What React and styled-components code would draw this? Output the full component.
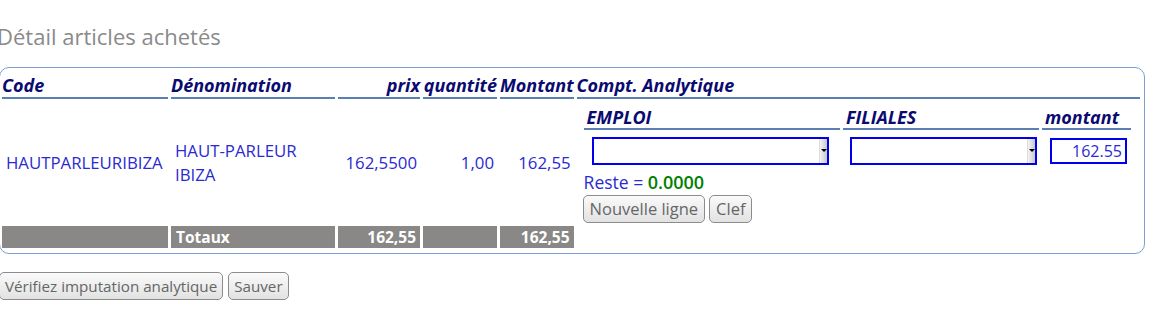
import React from "react";
import styled, { createGlobalStyle } from "styled-components";

const Global = createGlobalStyle`
  body {
    margin: 0;
    background: #fff;
    font-family: "Open Sans", "Noto Sans", sans-serif;
  }
`;

const Page = styled.div`
  margin-left: -3px;
  padding-top: 21px;
  width: 1148px;
`;

const Title = styled.h2`
  margin: 0 0 16px 0;
  font-size: 22px;
  font-weight: normal;
  color: #8a8a8a;
  line-height: 30px;
`;

const Box = styled.fieldset`
  margin: 0 0 0 2px;
  padding: 0 0 3px 0;
  border: 1px solid #7a9fd0;
  border-radius: 10px;
`;

const Table = styled.table`
  border-collapse: separate;
  border-spacing: 3px 2px;
  width: 100%;
  margin-left: -1px;
`;

const Th = styled.th`
  font-style: italic;
  font-weight: bold;
  font-size: 18px;
  color: #0a0a70;
  text-align: ${(p) => p.align || "left"};
  border-bottom: 2px solid #5b7fb2;
  padding: 5px 0 1px 0;
  line-height: 21px;
  white-space: nowrap;
  width: ${(p) => p.w || "auto"};
`;

const Td = styled.td`
  font-size: 16.8px;
  color: #2a2ad0;
  text-align: ${(p) => p.align || "left"};
  padding: 0 ${(p) => (p.align === "right" ? "3px" : "0")} 0 4px;
  line-height: 24px;
  vertical-align: middle;
`;

const ComptTd = styled.td`
  vertical-align: top;
  padding: 0 0 1px 0;
`;

const TotalTd = styled.td`
  background: ${(p) => (p.empty ? "transparent" : "#8a8886")};
  color: #fff;
  font-weight: bold;
  font-size: 15.5px;
  text-align: ${(p) => p.align || "left"};
  padding: 0 4px 0 5px;
  height: 21px;
  line-height: 21px;
  border-top: ${(p) => (p.dotted ? "1px dotted #888" : "none")};
`;

const SubTable = styled.table`
  border-collapse: separate;
  border-spacing: 3px 2px;
  width: calc(100% - 10px);
  margin: 0 0 0 4px;
`;

const SubTh = styled(Th)`
  padding: 4px 0 0 3px;
`;

const SubTd = styled.td`
  padding: 5px 0 0 ${(p) => p.pl || "8px"};
  vertical-align: top;
`;

const Select = styled.div`
  position: relative;
  box-sizing: border-box;
  height: 28px;
  width: ${(p) => p.w};
  border: 2px solid #0000ee;
  background: #fff;
`;

const Arrow = styled.span`
  position: absolute;
  right: 0;
  top: 0;
  bottom: 0;
  width: 7px;
  background: linear-gradient(to right, #f4f4f4, #c8c8c8);
  border-left: 1px solid #ddd;
  &::after {
    content: "";
    position: absolute;
    top: 10px;
    left: 1px;
    border-left: 3px solid transparent;
    border-right: 3px solid transparent;
    border-top: 3px solid #000;
  }
`;

const Amount = styled.div`
  box-sizing: border-box;
  width: 77px;
  height: 26px;
  margin-top: 1px;
  border: 2px solid #0000ee;
  color: #2a2ad0;
  font-size: 16px;
  text-align: right;
  padding: 0 3px;
  line-height: 22px;
`;

const Reste = styled.div`
  font-size: 17.5px;
  color: #2a2ad0;
  padding: 4px 0 0 7px;
  line-height: 22px;
  b {
    color: #008000;
    font-weight: 600;
    font-size: 18px;
  }
`;

const Actions = styled.div`
  display: flex;
  gap: 4px;
  padding: 2px 0 0 6px;
`;

const Button = styled.button`
  font-family: "Open Sans", "Noto Sans", sans-serif;
  font-size: ${(p) => (p.big ? "16.5px" : "15.2px")};
  color: #666;
  height: 28px;
  padding: 0 ${(p) => (p.big ? "6px" : "5px")};
  border: 1px solid #8c8c8c;
  border-radius: 5px;
  background: linear-gradient(to bottom, #fafafa, #e2e2e2);
  line-height: 24px;
`;

const Footer = styled.div`
  display: flex;
  gap: 5px;
  margin: 18px 0 0 2px;
`;

export default function App() {
  return (
    <Page>
      <Global />
      <Title>Détail articles achetés</Title>
      <Box>
        <Table>
          <thead>
            <tr>
              <Th w="166px">Code</Th>
              <Th w="164px">Dénomination</Th>
              <Th w="82px" align="right">prix</Th>
              <Th w="74px" align="right">quantité</Th>
              <Th w="72px" align="right">Montant</Th>
              <Th>Compt. Analytique</Th>
            </tr>
          </thead>
          <tbody>
            <tr>
              <Td>HAUTPARLEURIBIZA</Td>
              <Td>
                HAUT-PARLEUR
                <br />
                IBIZA
              </Td>
              <Td align="right">162,5500</Td>
              <Td align="right">1,00</Td>
              <Td align="right">162,55</Td>
              <ComptTd>
                <SubTable>
                  <thead>
                    <tr>
                      <SubTh>EMPLOI</SubTh>
                      <SubTh w="193px">FILIALES</SubTh>
                      <SubTh w="86px">montant</SubTh>
                    </tr>
                  </thead>
                  <tbody>
                    <tr>
                      <SubTd>
                        <Select w="237px">
                          <Arrow />
                        </Select>
                      </SubTd>
                      <SubTd pl="7px">
                        <Select w="187px">
                          <Arrow />
                        </Select>
                      </SubTd>
                      <SubTd pl="8px">
                        <Amount>162.55</Amount>
                      </SubTd>
                    </tr>
                  </tbody>
                </SubTable>
                <Reste>
                  Reste = <b>0.0000</b>
                </Reste>
                <Actions>
                  <Button big>Nouvelle ligne</Button>
                  <Button big>Clef</Button>
                </Actions>
              </ComptTd>
            </tr>
            <tr>
              <TotalTd />
              <TotalTd dotted>Totaux</TotalTd>
              <TotalTd align="right">162,55</TotalTd>
              <TotalTd />
              <TotalTd align="right">162,55</TotalTd>
              <TotalTd empty />
            </tr>
          </tbody>
        </Table>
      </Box>
      <Footer>
        <Button>Vérifiez imputation analytique</Button>
        <Button>Sauver</Button>
      </Footer>
    </Page>
  );
}
